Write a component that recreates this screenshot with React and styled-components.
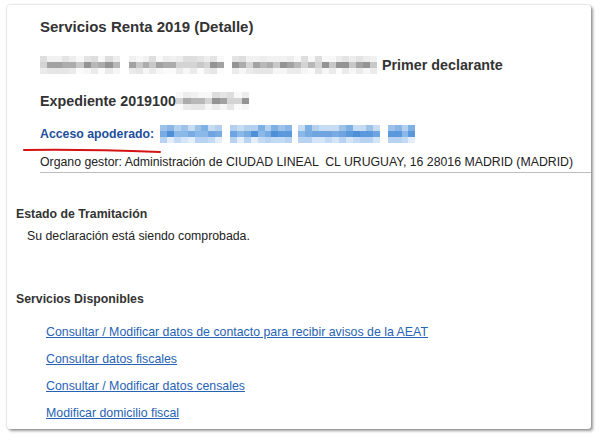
import React from "react";
import styled, { createGlobalStyle } from "styled-components";

const GlobalStyle = createGlobalStyle`
    html, body {
        margin: 0;
        padding: 0;
        background: #ffffff;
    }
    body {
        font-family: "Liberation Sans", Arial, sans-serif;
        color: #222;
    }
`;

const Page = styled.div`
    width: 600px;
    height: 437px;
    padding: 5px 0 0 7px;
    box-sizing: border-box;
    overflow: hidden;
`;

const Card = styled.div`
    position: relative;
    width: 584px;
    height: 424px;
    background: #fff;
    border-radius: 3px;
    box-shadow: 0 0 2px rgba(0, 0, 0, 0.3), 2px 2px 3px rgba(0, 0, 0, 0.38);
    overflow: hidden;
`;

const Header = styled.div`
    padding: 13px 0 0 33px;
    color: #333;
`;

const Title = styled.h1`
    margin: 0;
    height: 18px;
    line-height: 18px;
    font-size: 15px;
    font-weight: bold;
`;

const Row = styled.div`
    display: flex;
    align-items: center;
    height: ${p => p.$h || 22}px;
    margin-top: ${p => p.$mt || 0}px;
`;

const Strong = styled.span`
    font-size: ${p => p.$size || 14.3}px;
    font-weight: bold;
    color: ${p => p.$color || "#333"};
    white-space: nowrap;
`;

const Gap = styled.span`
    display: inline-block;
    width: ${p => p.$w}px;
    flex: none;
`;

const Organo = styled.div`
    margin-top: 10px;
    height: 18px;
    line-height: 16px;
    font-size: 12.3px;
    color: #222;
    white-space: pre;
    border-bottom: 1px solid #bdbdbd;
`;

const Section = styled.div`
    padding-left: 9px;
    margin-top: ${p => p.$mt}px;
`;

const SectionTitle = styled.h2`
    margin: 0;
    font-size: 12.3px;
    line-height: 16px;
    font-weight: bold;
    color: #333;
`;

const Status = styled.p`
    margin: 6px 0 0 11px;
    font-size: 12.3px;
    line-height: 16px;
    color: #222;
`;

const Links = styled.ul`
    list-style: none;
    margin: 17px 0 0 30px;
    padding: 0;
    display: flex;
    flex-direction: column;
    gap: 11px;
`;

const LinkItem = styled.li`
    line-height: 16px;
    font-size: 12.35px;
`;

const Link = styled.a`
    color: #2763b4;
    text-decoration: underline;
    cursor: pointer;
`;

const MosaicGrid = styled.span`
    display: inline-grid;
    flex: none;
    width: ${p => p.$w}px;
    grid-auto-flow: column;
    grid-template-rows: repeat(3, 6px);
    grid-auto-columns: 1fr;
    filter: blur(0.6px);
`;

const Mark = styled.svg`
    position: absolute;
    left: 16px;
    top: 141px;
    overflow: visible;
`;

const palettes = {
    gray: [
        ["#f1f1f1", "#e4e4e4", "#f8f8f8", "#dedede", "#ededed"],
        ["#b8b8b8", "#a2a2a2", "#c8c8c8", "#acacac", "#949494", "#d4d4d4"],
        ["#f6f6f6", "#ebebeb", "#fbfbfb", "#e6e6e6"],
    ],
    blue: [
        ["#9dc2ea", "#7fb0e4", "#b4d0ef", "#89b6e6", "#c6dcf3"],
        ["#5b98dc", "#6ea5e0", "#4d8fd9", "#8ab8e8", "#78abe2"],
        ["#d4e5f7", "#c2daf3", "#e3eefa", "#b7d3f1"],
    ],
};

const makeRand = seed => {
    let s = seed;
    return () => {
        s = (s * 9301 + 49297) % 233280;
        return s / 233280;
    };
};

const Mosaic = ({ width, tone, seed }) => {
    const rand = makeRand(seed);
    const cols = Math.max(1, Math.round(width / 7));
    const pal = palettes[tone];
    const cells = [];
    for (let c = 0; c < cols; c++) {
        for (let r = 0; r < 3; r++) {
            const list = pal[r];
            const color = list[Math.floor(rand() * list.length)];
            cells.push(<span key={`${c}-${r}`} style={{ background: color }} />);
        }
    }
    return <MosaicGrid $w={width}>{cells}</MosaicGrid>;
};

const Blurred = ({ parts, tone, seed }) => (
    <>
        {parts.map((p, i) =>
            p.gap ? <Gap key={i} $w={p.gap} /> : <Mosaic key={i} width={p.w} tone={tone} seed={seed + i * 17} />
        )}
    </>
);

const services = [
    "Consultar / Modificar datos de contacto para recibir avisos de la AEAT",
    "Consultar datos fiscales",
    "Consultar / Modificar datos censales",
    "Modificar domicilio fiscal",
];

const App = () => (
    <>
        <GlobalStyle />
        <Page>
            <Card>
                <Header>
                    <Title>Servicios Renta 2019 (Detalle)</Title>
                    <Row $mt={18}>
                        <Blurred
                            tone="gray"
                            seed={11}
                            parts={[{ w: 80 }, { gap: 9 }, { w: 95 }, { gap: 8 }, { w: 145 }, { gap: 5 }]}
                        />
                        <Strong>Primer declarante</Strong>
                    </Row>
                    <Row $mt={14}>
                        <Strong>Expediente 2019100</Strong>
                        <Blurred tone="gray" seed={5} parts={[{ w: 73 }]} />
                    </Row>
                    <Row $mt={12} $h={20}>
                        <Strong $size={12.3} $color="#1d4f9a">Acceso apoderado:</Strong>
                        <Gap $w={6} />
                        <Blurred
                            tone="blue"
                            seed={23}
                            parts={[{ w: 62 }, { gap: 8 }, { w: 62 }, { gap: 6 }, { w: 82 }, { gap: 8 }, { w: 27 }]}
                        />
                    </Row>
                    <Organo>Organo gestor: Administración de CIUDAD LINEAL  CL URUGUAY, 16 28016 MADRID (MADRID)</Organo>
                </Header>

                <Section $mt={33}>
                    <SectionTitle>Estado de Tramitación</SectionTitle>
                    <Status>Su declaración está siendo comprobada.</Status>
                </Section>

                <Section $mt={47}>
                    <SectionTitle>Servicios Disponibles</SectionTitle>
                    <Links>
                        {services.map(s => (
                            <LinkItem key={s}>
                                <Link>{s}</Link>
                            </LinkItem>
                        ))}
                    </Links>
                </Section>

                <Mark width="140" height="10" viewBox="0 0 140 10">
                    <path d="M1 4 Q 60 3 137 6" stroke="#d41414" strokeWidth="2" fill="none" strokeLinecap="round" />
                </Mark>
            </Card>
        </Page>
    </>
);

export default App;
